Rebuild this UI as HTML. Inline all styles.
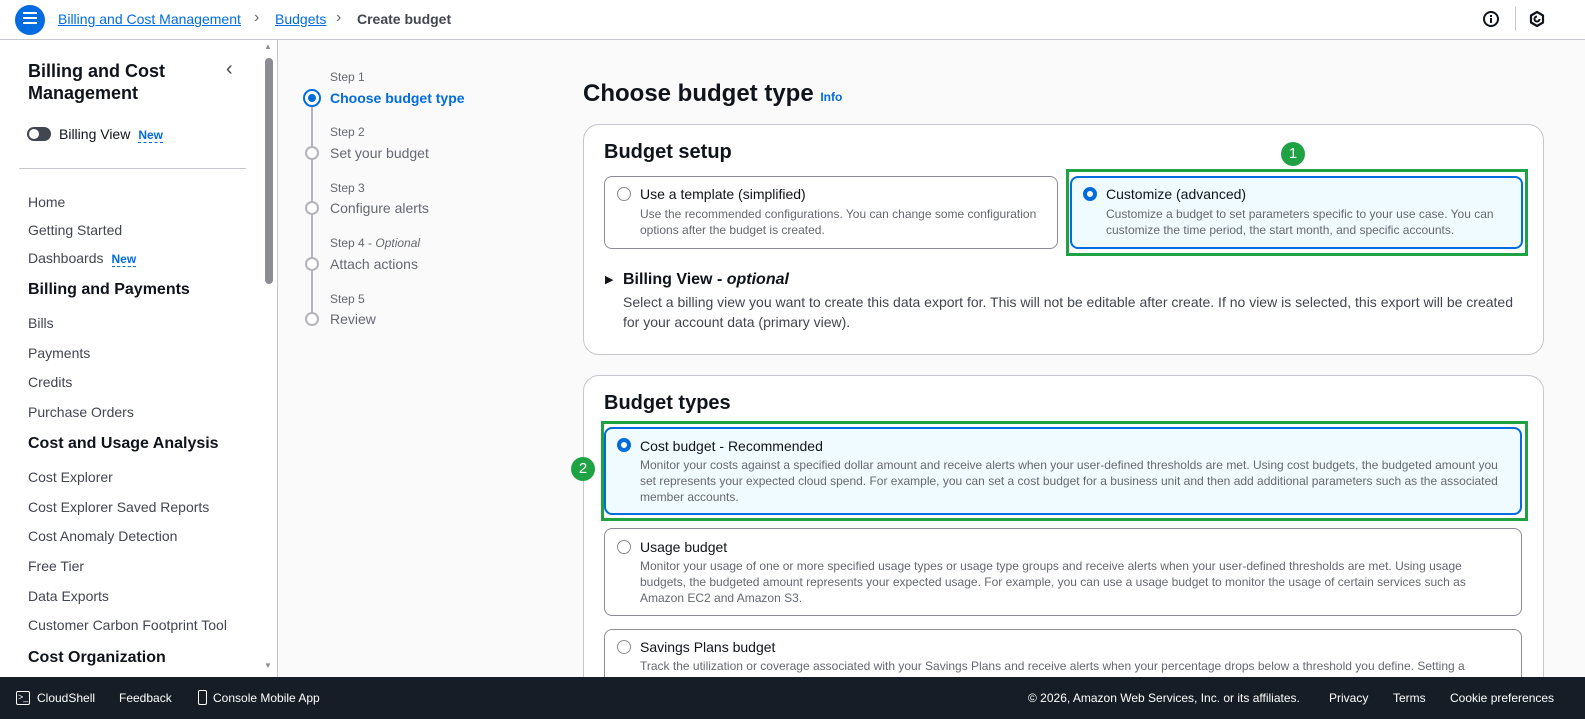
<!DOCTYPE html>
<html><head><meta charset="utf-8"><style>
*{box-sizing:border-box;margin:0;padding:0}
html,body{width:1585px;height:719px;overflow:hidden}
body{font-family:"Liberation Sans",sans-serif;background:#fafafa;position:relative;color:#0f141a}
.abs{position:absolute}
.top{left:0;top:0;width:1585px;height:40px;background:#fff;border-bottom:1px solid #c6c6cd}
.side{left:0;top:40px;width:262px;height:637px;background:#fff}
.sb{left:262px;top:40px;width:16px;height:637px;background:#fff;border-right:1px solid #c6c6cd}
.nav{left:28px;font-size:14px;color:#424650}
.navh{left:28px;font-size:16px;font-weight:bold;color:#0f141a}
.new{color:#006ce0;font-weight:bold;font-size:12px;border-bottom:1px dashed #006ce0;margin-left:8px}
.stepl{left:330px;font-size:12px;color:#656871}
.stept{left:330px;font-size:14px;color:#656871}
.circ{left:305px;width:14px;height:14px;border:2px solid #b4b4bb;border-radius:50%;background:#fff}
.card{background:#fff;border:1px solid #c6c6cd;border-radius:16px}
.opt{border:1px solid #8c8c94;border-radius:8px;background:#fff}
.sel{border:2px solid #006ce0;background:#f0fbff}
.green{border:3px solid #1fa244}
.t{font-size:14px;color:#0f141a}
.d{font-size:12px;color:#656871;line-height:16px}
.r{width:14px;height:14px;border-radius:50%;border:1.5px solid #8c8c94;background:#fff}
.rs{border:4px solid #006ce0}
.badge{width:24px;height:24px;border-radius:50%;background:#1fa244;color:#fff;font-size:15px;text-align:center;line-height:24px}
.foot{left:0;top:677px;width:1585px;height:42px;background:#161d26;color:#fff;font-size:12px;z-index:10}
.foot span{position:absolute;top:14px}
</style></head><body>
<div class="abs top"></div>
<div class="abs" style="left:15px;top:5px;width:30px;height:30px;border-radius:50%;background:#006ce0"></div>
<div class="abs" style="left:23px;top:12px;width:14px;height:2px;background:#fff;box-shadow:0 5px 0 #fff,0 10px 0 #fff"></div>
<div class="abs" style="left:58px;top:11px;font-size:14px;color:#006ce0;text-decoration:underline">Billing and Cost Management</div>
<div class="abs" style="left:254px;top:9px;font-size:16px;color:#656871">&#x203A;</div>
<div class="abs" style="left:275px;top:11px;font-size:14px;color:#006ce0;text-decoration:underline">Budgets</div>
<div class="abs" style="left:336px;top:9px;font-size:16px;color:#656871">&#x203A;</div>
<div class="abs" style="left:357px;top:11px;font-size:14px;color:#424650;font-weight:bold">Create budget</div>
<svg class="abs" style="left:1482px;top:10px" width="18" height="18" viewBox="0 0 18 18"><circle cx="9" cy="9" r="7" fill="none" stroke="#0f141a" stroke-width="2"/><rect x="8" y="8" width="2" height="5" fill="#0f141a"/><rect x="8" y="5" width="2" height="2" fill="#0f141a"/></svg>
<div class="abs" style="left:1515px;top:7px;width:1px;height:24px;background:#c6c6cd"></div>
<svg class="abs" style="left:1528px;top:10px" width="18" height="18" viewBox="0 0 18 18"><polygon points="9,2 15,5.5 15,12.5 9,16 3,12.5 3,5.5" fill="none" stroke="#0f141a" stroke-width="2.2" stroke-linejoin="round"/><path d="M9 6.5a2.5 2.5 0 1 0 2.5 2.5" fill="none" stroke="#0f141a" stroke-width="2"/></svg>

<div class="abs side"></div>
<div class="abs sb"></div>
<div class="abs" style="left:265px;top:58px;width:8px;height:226px;background:#8c8c94;border-radius:4px"></div>
<div class="abs" style="left:264px;top:42px;font-size:8px;color:#8c8c94">&#9650;</div>
<div class="abs" style="left:264px;top:661px;font-size:8px;color:#8c8c94">&#9660;</div>
<div class="abs" style="left:28px;top:60px;font-size:18px;font-weight:bold;line-height:22px">Billing and Cost<br>Management</div>
<div class="abs" style="left:226px;top:58px;font-size:20px;color:#424650">&#x2039;</div>
<div class="abs" style="left:27px;top:127px;width:24px;height:14px;border-radius:7px;background:#424650"></div>
<div class="abs" style="left:29px;top:129px;width:10px;height:10px;border-radius:50%;background:#fff"></div>
<div class="abs nav" style="left:59px;top:126px;color:#0f141a">Billing View<span class="new">New</span></div>
<div class="abs" style="left:19px;top:168px;width:227px;height:1px;background:#c6c6cd"></div>
<div class="abs nav" style="top:194px">Home</div>
<div class="abs nav" style="top:222px">Getting Started</div>
<div class="abs nav" style="top:250px">Dashboards<span class="new">New</span></div>
<div class="abs navh" style="top:281px">Billing and Payments</div>
<div class="abs nav" style="top:315px">Bills</div>
<div class="abs nav" style="top:345px">Payments</div>
<div class="abs nav" style="top:374px">Credits</div>
<div class="abs nav" style="top:404px">Purchase Orders</div>
<div class="abs navh" style="top:435px">Cost and Usage Analysis</div>
<div class="abs nav" style="top:469px">Cost Explorer</div>
<div class="abs nav" style="top:499px">Cost Explorer Saved Reports</div>
<div class="abs nav" style="top:528px">Cost Anomaly Detection</div>
<div class="abs nav" style="top:558px">Free Tier</div>
<div class="abs nav" style="top:588px">Data Exports</div>
<div class="abs nav" style="top:617px">Customer Carbon Footprint Tool</div>
<div class="abs navh" style="top:649px">Cost Organization</div>

<div class="abs" style="left:311px;top:105px;width:2px;height:210px;background:#b4b4bb"></div>
<div class="abs stepl" style="top:70px">Step 1</div>
<div class="abs" style="left:303px;top:89px;width:18px;height:18px;border:2px solid #006ce0;border-radius:50%;background:#fff"></div>
<div class="abs" style="left:308px;top:94px;width:8px;height:8px;border-radius:50%;background:#006ce0"></div>
<div class="abs stept" style="top:90px;color:#006ce0;font-weight:bold">Choose budget type</div>
<div class="abs stepl" style="top:125px">Step 2</div><div class="abs circ" style="top:146px"></div>
<div class="abs stept" style="top:145px">Set your budget</div>
<div class="abs stepl" style="top:181px">Step 3</div><div class="abs circ" style="top:201px"></div>
<div class="abs stept" style="top:200px">Configure alerts</div>
<div class="abs stepl" style="top:236px">Step 4 - <i>Optional</i></div><div class="abs circ" style="top:257px"></div>
<div class="abs stept" style="top:256px">Attach actions</div>
<div class="abs stepl" style="top:292px">Step 5</div><div class="abs circ" style="top:312px"></div>
<div class="abs stept" style="top:311px">Review</div>

<div class="abs" style="left:583px;top:80px;font-size:24px;font-weight:bold">Choose budget type <span style="font-size:12px;color:#006ce0">Info</span></div>

<div class="abs card" style="left:583px;top:124px;width:961px;height:231px"></div>
<div class="abs" style="left:604px;top:141px;font-size:20px;font-weight:bold">Budget setup</div>
<div class="abs badge" style="left:1281px;top:142px">1</div>
<div class="abs opt" style="left:604px;top:176px;width:454px;height:73px"></div>
<div class="abs r" style="left:617px;top:187px"></div>
<div class="abs t" style="left:640px;top:186px">Use a template (simplified)</div>
<div class="abs d" style="left:640px;top:206px;width:410px">Use the recommended configurations. You can change some configuration options after the budget is created.</div>
<div class="abs green" style="left:1066px;top:169px;width:462px;height:87px"></div>
<div class="abs opt sel" style="left:1070px;top:176px;width:453px;height:73px"></div>
<div class="abs r rs" style="left:1083px;top:187px"></div>
<div class="abs t" style="left:1106px;top:186px">Customize (advanced)</div>
<div class="abs d" style="left:1106px;top:206px;width:410px">Customize a budget to set parameters specific to your use case. You can customize the time period, the start month, and specific accounts.</div>
<div class="abs" style="left:605px;top:273px;font-size:11px">&#9654;</div>
<div class="abs" style="left:623px;top:271px;font-size:16px;font-weight:bold">Billing View - <i>optional</i></div>
<div class="abs" style="left:623px;top:292px;font-size:14px;color:#424650;line-height:20px;width:900px">Select a billing view you want to create this data export for. This will not be editable after create. If no view is selected, this export will be created for your account data (primary view).</div>

<div class="abs card" style="left:583px;top:375px;width:961px;height:360px"></div>
<div class="abs" style="left:604px;top:392px;font-size:20px;font-weight:bold">Budget types</div>
<div class="abs badge" style="left:571px;top:457px">2</div>
<div class="abs green" style="left:601px;top:421px;width:927px;height:100px"></div>
<div class="abs opt sel" style="left:604px;top:427px;width:918px;height:88px"></div>
<div class="abs r rs" style="left:617px;top:438px"></div>
<div class="abs t" style="left:640px;top:438px">Cost budget - Recommended</div>
<div class="abs d" style="left:640px;top:457px;width:870px">Monitor your costs against a specified dollar amount and receive alerts when your user-defined thresholds are met. Using cost budgets, the budgeted amount you set represents your expected cloud spend. For example, you can set a cost budget for a business unit and then add additional parameters such as the associated member accounts.</div>
<div class="abs opt" style="left:604px;top:528px;width:918px;height:88px"></div>
<div class="abs r" style="left:617px;top:540px"></div>
<div class="abs t" style="left:640px;top:539px">Usage budget</div>
<div class="abs d" style="left:640px;top:558px;width:870px">Monitor your usage of one or more specified usage types or usage type groups and receive alerts when your user-defined thresholds are met. Using usage budgets, the budgeted amount represents your expected usage. For example, you can use a usage budget to monitor the usage of certain services such as Amazon EC2 and Amazon S3.</div>
<div class="abs opt" style="left:604px;top:629px;width:918px;height:88px"></div>
<div class="abs r" style="left:617px;top:640px"></div>
<div class="abs t" style="left:640px;top:639px">Savings Plans budget</div>
<div class="abs d" style="left:640px;top:658px;width:870px">Track the utilization or coverage associated with your Savings Plans and receive alerts when your percentage drops below a threshold you define. Setting a</div>

<div class="abs foot">
<div class="abs" style="left:16px;top:14px;width:14px;height:14px;border:1.5px solid #fff;border-radius:2px;font-size:9px;line-height:10px;padding-left:1px">&gt;_</div>
<span style="left:37px">CloudShell</span><span style="left:119px">Feedback</span>
<div class="abs" style="left:198px;top:13px;width:9px;height:15px;border:1.5px solid #fff;border-radius:2px"></div>
<span style="left:213px">Console Mobile App</span>
<span style="left:1028px">© 2026, Amazon Web Services, Inc. or its affiliates.</span>
<span style="left:1329px">Privacy</span><span style="left:1393px">Terms</span><span style="left:1450px">Cookie preferences</span>
</div>
</body></html>
